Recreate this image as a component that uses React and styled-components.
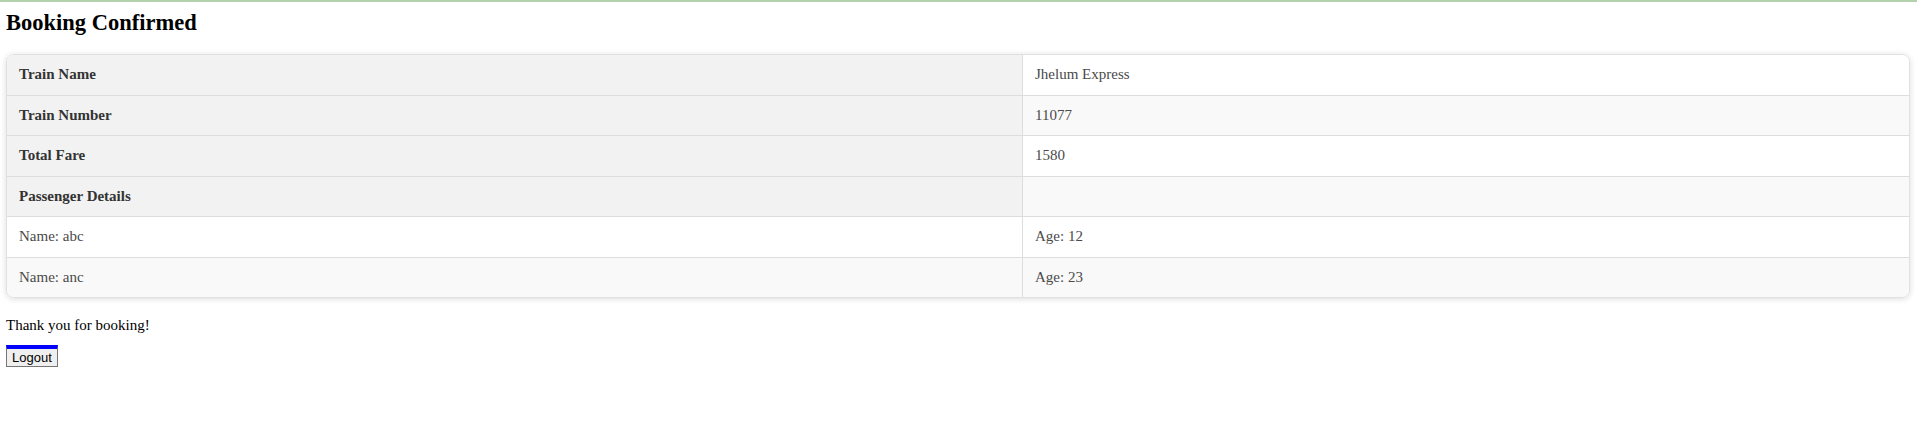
import styled, { createGlobalStyle } from "styled-components";

const GlobalStyle = createGlobalStyle`
  html, body {
    margin: 0;
    padding: 0;
    background: #fff;
  }
  body {
    font-family: "Liberation Serif", "Times New Roman", serif;
    color: #000;
  }
`;

const Page = styled.div`
  border-top: 2px solid #b3d1ac;
  padding: 0 7px 0 6px;
`;

const Title = styled.h2`
  font-size: 22.5px;
  font-weight: bold;
  margin: 7px 0 17px;
  line-height: 28px;
`;

const Card = styled.div`
  border-radius: 8px;
  overflow: hidden;
  box-shadow: 0 1px 6px rgba(0, 0, 0, 0.14);
  border: 1px solid #e0e0e0;
`;

const Table = styled.table`
  width: 100%;
  border-collapse: collapse;
  font-size: 15px;
`;

const Row = styled.tr`
  background: ${({ $even }) => ($even ? "#f9f9f9" : "#fff")};
  & > th,
  & > td {
    border-top: ${({ $first }) => ($first ? "none" : "1px solid #dddddd")};
  }
`;

const Head = styled.th`
  background: #f2f2f2;
  color: #333;
  font-weight: bold;
  text-align: left;
  width: 991px;
  height: 39.5px;
  padding: 0 12px;
  border-right: 1px solid #dddddd;
`;

const Cell = styled.td`
  color: #4a4a4a;
  height: 39.5px;
  padding: 0 12px;
  & + & {
    border-left: 1px solid #dddddd;
  }
  &:first-child {
    width: 991px;
  }
`;

const Note = styled.p`
  font-size: 15px;
  margin: 18px 0 11px;
  line-height: 18px;
`;

const LogoutButton = styled.button`
  font-family: Arial, "Liberation Sans", sans-serif;
  font-size: 13px;
  color: #000;
  background: #efefef;
  border: 1px solid #767676;
  border-top: 4px solid #0000ff;
  border-radius: 0;
  padding: 1px 5px;
  line-height: 15px;
`;

const details = [
  { label: "Train Name", value: "Jhelum Express" },
  { label: "Train Number", value: "11077" },
  { label: "Total Fare", value: "1580" },
  { label: "Passenger Details", value: "" },
];

const passengers = [
  { name: "abc", age: 12 },
  { name: "anc", age: 23 },
];

export default function App() {
  return (
    <>
      <GlobalStyle />
      <Page>
        <Title>Booking Confirmed</Title>
        <Card>
          <Table>
            <tbody>
              {details.map((d, i) => (
                <Row key={d.label} $even={i % 2 === 1} $first={i === 0}>
                  <Head>{d.label}</Head>
                  <Cell>{d.value}</Cell>
                </Row>
              ))}
              {passengers.map((p, i) => (
                <Row key={p.name} $even={i % 2 === 1}>
                  <Cell>Name: {p.name}</Cell>
                  <Cell>Age: {p.age}</Cell>
                </Row>
              ))}
            </tbody>
          </Table>
        </Card>
        <Note>Thank you for booking!</Note>
        <LogoutButton>Logout</LogoutButton>
      </Page>
    </>
  );
}
